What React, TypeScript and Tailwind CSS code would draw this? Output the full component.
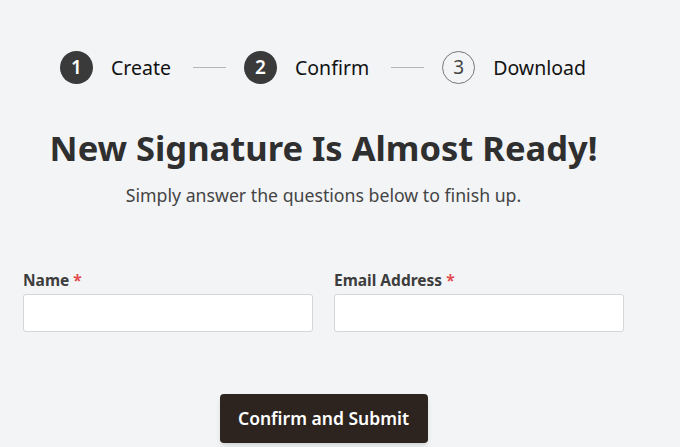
const steps = [
  { n: 1, label: "Create", done: true },
  { n: 2, label: "Confirm", done: true },
  { n: 3, label: "Download", done: false },
];

export default function App() {
  return (
    <div
      className="min-h-[447px] bg-[#f3f4f6] text-[#333]"
      style={{ fontFamily: '"Noto Sans", "Open Sans", sans-serif' }}
    >
      <div className="w-[647px] px-[23px]">
        {/* stepper */}
        <div className="flex items-center pt-[51px] pl-[37px]">
          {steps.map((s, i) => (
            <div key={s.n} className="flex items-center">
              {s.done ? (
                <div className="flex h-[33px] w-[33px] items-center justify-center rounded-full bg-[#3a3a3a] text-[19px] font-semibold text-white">
                  {s.n}
                </div>
              ) : (
                <div className="flex h-[33px] w-[33px] items-center justify-center rounded-full border border-[#777] text-[19px] text-[#444]">
                  {s.n}
                </div>
              )}
              <span className="ml-[18px] text-[19.5px] text-[#111]">{s.label}</span>
              {i < steps.length - 1 && (
                <div className="ml-[22px] mr-[18px] h-px w-[33px] bg-[#b5b5b5]" />
              )}
            </div>
          ))}
        </div>

        <h1 className="mt-[42px] text-center text-[34.5px] font-bold leading-[44px] text-[#2f2f2f]">
          New Signature Is Almost Ready!
        </h1>
        <p className="mt-[12px] text-center text-[17.7px] text-[#444]">
          Simply answer the questions below to finish up.
        </p>

        <div className="mt-[61px] grid grid-cols-2 gap-[21px]">
          {["Name", "Email Address"].map((l) => (
            <div key={l}>
              <label className="block text-[15.5px] font-bold leading-[20px] text-[#3d3d3d]">
                {l} <span className="text-[#e5484d]">*</span>
              </label>
              <input
                className="mt-[4px] block h-[38px] w-full rounded-[3px] border border-[#d6d6d6] bg-white px-2 outline-none"
                type={l === "Name" ? "text" : "email"}
              />
            </div>
          ))}
        </div>

        <div className="mt-[62px] flex justify-center">
          <button className="h-[49px] w-[208px] rounded-[4px] bg-[#2e241f] text-[17.5px] font-semibold text-white shadow-md">
            Confirm and Submit
          </button>
        </div>
      </div>
    </div>
  );
}
